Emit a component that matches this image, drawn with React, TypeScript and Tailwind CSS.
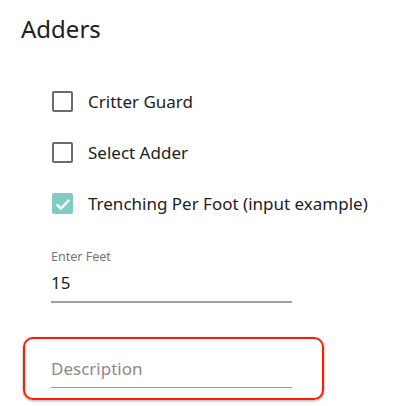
export default function App() {
  return (
    <div className="w-[410px] h-[406px] bg-white overflow-hidden font-['Noto_Sans',sans-serif] text-[#212121]">
      <h1 className="pl-[21px] pt-[13px] text-[24px] leading-[32px]">Adders</h1>

      <div className="mt-[46px] pl-[52px] flex flex-col gap-[30px]">
        <Check label="Critter Guard" />
        <Check label="Select Adder" />
        <Check label="Trenching Per Foot (input example)" checked />
      </div>

      <div className="mt-[35px] ml-[51px] w-[241px]">
        <div className="text-[12.5px] leading-[16px] text-[#757575]">Enter Feet</div>
        <div className="mt-[7px] text-[17px] leading-[22px] pb-[7px] border-b-2 border-[#a0a0a0]">15</div>
      </div>

      <div className="mt-[34px] ml-[23px] w-[301px] h-[63px] rounded-[10px] border-2 border-[#ff1a00] shadow-[0_1px_3px_rgba(0,0,0,0.35)] pl-[26px] pt-[18px]">
        <div className="w-[241px] text-[17px] leading-[24px] text-[#8a8a8a] pb-[6px] border-b border-[#9e9e9e]">Description</div>
      </div>
    </div>
  );
}

function Check({ label, checked = false }: { label: string; checked?: boolean }) {
  return (
    <div className="flex items-center h-[21px]">
      {checked ? (
        <div className="w-[21px] h-[21px] rounded-[2px] bg-[#80cbc4] flex items-center justify-center">
          <svg viewBox="0 0 24 24" className="w-[20px] h-[20px]" fill="none" stroke="white" strokeWidth="3">
            <path d="M4.5 12.5l5 5L19.5 7" />
          </svg>
        </div>
      ) : (
        <div className="w-[21px] h-[21px] rounded-[2px] border-[2.5px] border-[#6b6b6b]" />
      )}
      <span className="ml-[15px] text-[17px] leading-[24px]">{label}</span>
    </div>
  );
}
